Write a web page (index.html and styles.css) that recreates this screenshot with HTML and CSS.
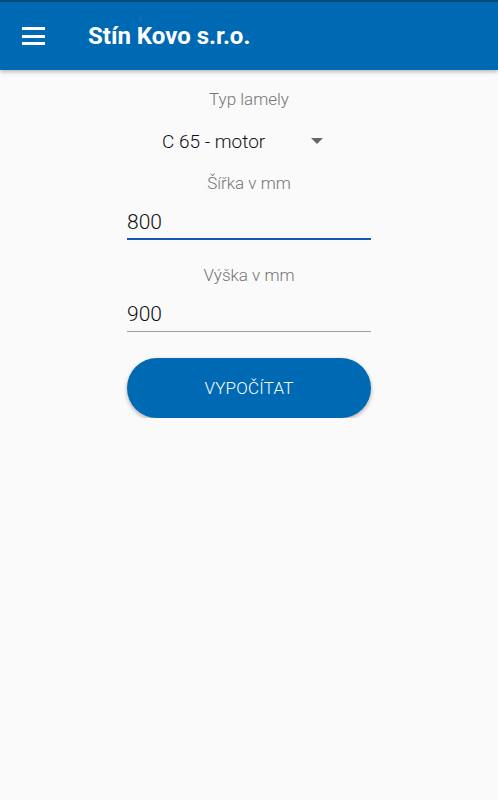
FILE: index.html
```html
<!DOCTYPE html>
<html lang="cs">
<head>
    <meta charset="UTF-8">
    <meta name="viewport" content="width=device-width, initial-scale=1.0">
    <title>Stín Kovo s.r.o.</title>
    <link rel="stylesheet" href="styles.css">
</head>
<body>
    <div class="statusbar"></div>
    <header class="toolbar">
        <button class="menu-btn" aria-label="Menu">
            <span></span><span></span><span></span>
        </button>
        <h1>Stín Kovo s.r.o.</h1>
    </header>

    <main class="form">
        <label class="field-label">Typ lamely</label>
        <div class="select">
            <span class="select-value">C 65 - motor</span>
            <span class="select-arrow"></span>
        </div>

        <label class="field-label">Šířka v mm</label>
        <div class="input input-focused">800</div>

        <label class="field-label label-second">Výška v mm</label>
        <div class="input">900</div>

        <button class="calc-btn">VYPOČÍTAT</button>
    </main>
</body>
</html>
```

FILE: styles.css
```css
body {
    margin: 0;
    background-color: #fafafa;
    font-family: Roboto, "Noto Sans", sans-serif;
}

.statusbar {
    height: 2px;
    background-color: #0d4a80;
}

.toolbar {
    height: 68px;
    background-color: #0069b4;
    display: flex;
    align-items: center;
    box-shadow: 0 2px 4px rgba(0, 0, 0, 0.25);
}

.menu-btn {
    width: 23px;
    height: 18px;
    margin-left: 22px;
    padding: 0;
    border: none;
    background: none;
    display: flex;
    flex-direction: column;
    justify-content: space-between;
}

    .menu-btn span {
        display: block;
        height: 3px;
        background-color: #fff;
    }

.toolbar h1 {
    margin: 0 0 0 43px;
    color: #fff;
    font-size: 24px;
    font-weight: 700;
}

.form {
    width: 244px;
    margin: 0 auto;
    display: flex;
    flex-direction: column;
    padding-top: 19px;
}

.field-label {
    text-align: center;
    color: #757575;
    font-size: 17px;
    font-weight: 300;
    line-height: 20px;
}

.label-second {
    margin-top: 25px;
}

.select {
    height: 44px;
    display: flex;
    align-items: center;
    justify-content: space-between;
    padding: 0 48px 0 35px;
    margin: 10px 0 10px 0;
}

.select-value {
    font-size: 19px;
    font-weight: 300;
    color: #111;
}

.select-arrow {
    width: 0;
    height: 0;
    border-left: 6px solid transparent;
    border-right: 6px solid transparent;
    border-top: 6px solid #666;
}

.input {
    margin-top: 13px;
    height: 32px;
    line-height: 32px;
    font-size: 21px;
    font-weight: 300;
    color: #111;
    border-bottom: 1px solid #9e9e9e;
    padding-bottom: 1px;
}

.input-focused {
    border-bottom: 2px solid #1a55b0;
    padding-bottom: 0;
}

.calc-btn {
    margin-top: 26px;
    height: 60px;
    border: none;
    border-radius: 30px;
    background-color: #0069b4;
    color: #fff;
    font-family: Roboto, sans-serif;
    font-size: 17px;
    font-weight: 300;
    letter-spacing: 0.2px;
    box-shadow: 0 2px 4px rgba(0, 0, 0, 0.3);
}
```
